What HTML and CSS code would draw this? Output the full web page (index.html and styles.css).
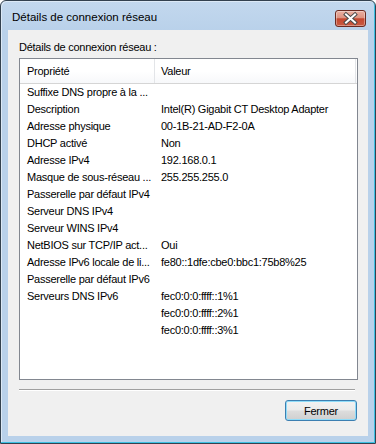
FILE: index.html
```html
<!DOCTYPE html>
<html lang="fr">

<head>
    <meta charset="UTF-8">
    <title>Détails de connexion réseau</title>
    <link rel="stylesheet" href="styles.css">
</head>

<body>

    <div class="window">
        <div class="titlebar">
            <span class="title">Détails de connexion réseau</span>
            <div class="close">
                <svg width="29" height="15" viewBox="0 0 29 15">
                    <path d="M10 3.5 L19 11.5 M19 3.5 L10 11.5" stroke="#4a4a4a" stroke-width="4" stroke-linecap="square" />
                    <path d="M10 3.5 L19 11.5 M19 3.5 L10 11.5" stroke="#ffffff" stroke-width="2" stroke-linecap="square" />
                </svg>
            </div>
        </div>

        <div class="client">
            <div class="caption">Détails de connexion réseau :</div>

            <div class="listview">
                <div class="header">
                    <div class="col">Propriété</div>
                    <div class="col">Valeur</div>
                    <div class="filler"></div>
                </div>
                <div class="row"><span>Suffixe DNS propre à la ...</span><span></span></div>
                <div class="row"><span>Description</span><span>Intel(R) Gigabit CT Desktop Adapter</span></div>
                <div class="row"><span>Adresse physique</span><span>00-1B-21-AD-F2-0A</span></div>
                <div class="row"><span>DHCP activé</span><span>Non</span></div>
                <div class="row"><span>Adresse IPv4</span><span>192.168.0.1</span></div>
                <div class="row"><span>Masque de sous-réseau ...</span><span>255.255.255.0</span></div>
                <div class="row"><span>Passerelle par défaut IPv4</span><span></span></div>
                <div class="row"><span>Serveur DNS IPv4</span><span></span></div>
                <div class="row"><span>Serveur WINS IPv4</span><span></span></div>
                <div class="row"><span>NetBIOS sur TCP/IP act...</span><span>Oui</span></div>
                <div class="row"><span>Adresse IPv6 locale de li...</span><span>fe80::1dfe:cbe0:bbc1:75b8%25</span></div>
                <div class="row"><span>Passerelle par défaut IPv6</span><span></span></div>
                <div class="row"><span>Serveurs DNS IPv6</span><span>fec0:0:0:ffff::1%1</span></div>
                <div class="row"><span></span><span>fec0:0:0:ffff::2%1</span></div>
                <div class="row"><span></span><span>fec0:0:0:ffff::3%1</span></div>
            </div>

            <div class="separator"></div>

            <div class="footer">
                <button class="button">Fermer</button>
            </div>
        </div>
    </div>

</body>

</html>
```

FILE: styles.css
```css
* {
    margin: 0;
    padding: 0;
    box-sizing: border-box;
}

body {
    background: white;
    font-family: "Liberation Sans", Arial, sans-serif;
    color: black;
}

.window {
    width: 376px;
    height: 444px;
    display: flex;
    flex-direction: column;
    padding: 0 7px 7px;
    border: 1px solid #33414f;
    border-radius: 6px 6px 0 0;
    background: linear-gradient(#c3d8ee, #b9d1ea 30px);
    box-shadow: inset -1px -1px 0 #3cc0e2, inset 1px 1px 0 #dce9f6;
}

/* title bar */

.titlebar {
    height: 29px;
    display: flex;
    align-items: flex-start;
    justify-content: space-between;
}

.title {
    margin: 9px 0 0 4px;
    font-size: 11.5px;
    line-height: 15px;
}

.close {
    width: 31px;
    height: 17px;
    margin: 9px 2px 0 0;
    border: 1px solid #6b2a21;
    border-radius: 3px;
    background: linear-gradient(#eab0a2 0%, #dd9382 45%, #c4472f 52%, #c95b43 100%);
    box-shadow: inset 0 0 0 1px rgba(255, 255, 255, 0.35);
}

.close svg {
    display: block;
}

/* client area */

.client {
    flex: 1;
    display: flex;
    flex-direction: column;
    padding: 10px 10px 15px 11px;
    background: #f0f0f0;
    font-size: 11px;
    letter-spacing: -0.25px;
}

.caption {
    line-height: 15px;
    margin-bottom: 3px;
}

.listview {
    height: 322px;
    border: 1px solid #828790;
    background: white;
}

.header {
    height: 25px;
    display: grid;
    grid-template-columns: 135px 201px 1fr;
    border-bottom: 1px solid #d5d5d5;
    background: linear-gradient(#ffffff, #ffffff 50%, #f7f8fa);
}

.header .col {
    padding-left: 7px;
    line-height: 24px;
    border-right: 1px solid #e3e5e8;
}

.header .col:nth-child(2) {
    padding-left: 6px;
}

.row {
    height: 17px;
    display: grid;
    grid-template-columns: 135px 1fr;
    line-height: 17px;
    white-space: nowrap;
}

.row span {
    overflow: hidden;
    padding-left: 7px;
}

.row span:nth-child(2) {
    padding-left: 6px;
}

.separator {
    margin: 9px 3px 0 0;
    height: 2px;
    border-top: 1px solid #a0a0a0;
    border-bottom: 1px solid #ffffff;
}

.footer {
    display: flex;
    justify-content: flex-end;
    margin-top: 9px;
    padding-right: 1px;
}

.button {
    width: 72px;
    height: 21px;
    font-family: "Liberation Sans", Arial, sans-serif;
    font-size: 11px;
    letter-spacing: -0.25px;
    color: black;
    border: 1px solid #3c7fb1;
    border-radius: 3px;
    background: linear-gradient(#f2f2f2 0%, #ebebeb 48%, #dddddd 52%, #cfcfcf 100%);
    box-shadow: inset 0 0 0 1px #8fdcf9;
}
```
